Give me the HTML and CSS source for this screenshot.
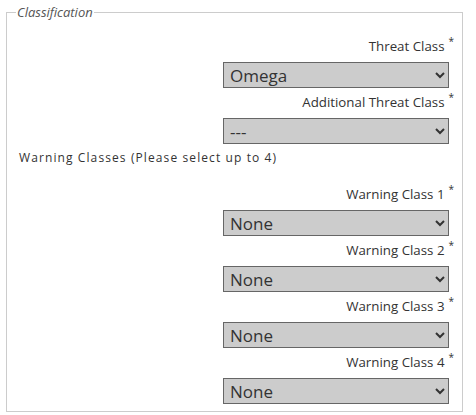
FILE: index.html
```html
<!DOCTYPE html>
<html>
<head>
<meta charset="utf-8">
<link rel="stylesheet" href="styles.css">
</head>
<body>
<fieldset class="group">
  <legend class="group-title">Classification</legend>
  <div class="field">
    <label class="field-label">Threat Class<span class="req">*</span></label>
    <select class="field-select"><option>Omega</option></select>
  </div>
  <div class="field">
    <label class="field-label">Additional Threat Class<span class="req">*</span></label>
    <select class="field-select"><option>---</option></select>
  </div>
  <p class="note">Warning Classes (Please select up to 4)</p>
  <div class="field">
    <label class="field-label">Warning Class 1<span class="req">*</span></label>
    <select class="field-select"><option>None</option></select>
  </div>
  <div class="field">
    <label class="field-label">Warning Class 2<span class="req">*</span></label>
    <select class="field-select"><option>None</option></select>
  </div>
  <div class="field">
    <label class="field-label">Warning Class 3<span class="req">*</span></label>
    <select class="field-select"><option>None</option></select>
  </div>
  <div class="field">
    <label class="field-label">Warning Class 4<span class="req">*</span></label>
    <select class="field-select"><option>None</option></select>
  </div>
</fieldset>
</body>
</html>
```
FILE: styles.css
```css
html, body {
  margin: 0;
  padding: 0;
  background: #fff;
}
body {
  padding: 4px 13px 0 6px;
  font-family: "Open Sans", "DejaVu Sans", sans-serif;
  color: #333;
}
.group {
  margin: 0;
  border: 1px solid #ccc;
  padding: 16px 12px 3px 12px;
  min-width: 0;
}
.group-title {
  font-style: italic;
  font-size: 13px;
  line-height: 16px;
  color: #555;
  padding: 0 1px;
  margin-left: -3px;
}
.field {
  display: flex;
  flex-direction: column;
  align-items: flex-end;
  margin-bottom: 4px;
}
.field-label {
  font-size: 13.3px;
  line-height: 20px;
  color: #333;
  margin-bottom: 6px;
  margin-right: -4px;
}
.req {
  font-size: 10px;
  line-height: 10px;
  margin-left: 4px;
  position: relative;
  top: -6px;
}
.field-select {
  width: 226px;
  height: 26px;
  background-color: #ccc;
  border: 1px solid #666;
  border-radius: 0;
  color: #333;
  font-family: "Open Sans", "DejaVu Sans", sans-serif;
  font-size: 17px;
  padding: 0 2px;
  margin: 0 1px 0 0;
}
.note {
  margin: 2px 0 16px 0;
  font-size: 12px;
  letter-spacing: 1.1px;
  line-height: 20px;
  color: #333;
}
```
